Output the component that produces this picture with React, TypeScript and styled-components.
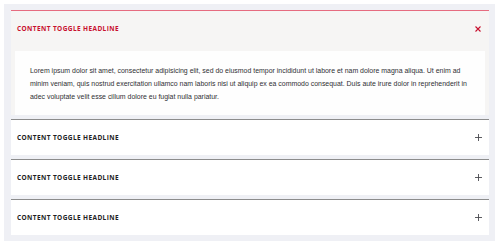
import React, { useState } from "react";
import styled, { createGlobalStyle } from "styled-components";

const GlobalStyle = createGlobalStyle`
  html, body { margin: 0; padding: 0; background: #ffffff; }
  body { font-family: "Open Sans", "Liberation Sans", Arial, sans-serif; }
`;

const Wrapper = styled.div`
  margin: 4px 5px 5px 4px;
  padding: 6px 6px 6px 7px;
  background: #eff0f5;
  display: flex;
  flex-direction: column;
  gap: 4px;
`;

const Item = styled.div<{ $open: boolean }>`
  background: ${(p) => (p.$open ? "#f6f5f4" : "#ffffff")};
  border-top: 1px solid ${(p) => (p.$open ? "#e66c80" : "#8c8c8c")};
  display: flex;
  flex-direction: column;
`;

const Header = styled.button<{ $open: boolean }>`
  all: unset;
  box-sizing: border-box;
  height: 35px;
  padding: 0 6px 0 6px;
  display: flex;
  align-items: center;
  justify-content: space-between;
  cursor: pointer;
  font-family: "Open Sans", sans-serif;
  font-weight: 700;
  font-size: 6.5px;
  letter-spacing: 0.4px;
  text-transform: uppercase;
  color: ${(p) => (p.$open ? "#c8102e" : "#1e1e24")};
`;

const Icon = styled.span`
  width: 8px;
  height: 8px;
  margin-right: 1px;
  display: flex;
  align-items: center;
  justify-content: center;
`;

const Body = styled.div`
  padding: 5px 4px 0 4px;
`;

const Panel = styled.div`
  background: #fefefe;
  padding: 13px 15px 12px 15px;
  font-family: "Liberation Sans", Arial, sans-serif;
  font-size: 6.95px;
  line-height: 13px;
  color: #2f2f33;
`;

const text =
  "Lorem ipsum dolor sit amet, consectetur adipisicing elit, sed do eiusmod tempor incididunt ut labore et nam dolore magna aliqua. Ut enim ad minim veniam, quis nostrud exercitation ullamco nam laboris nisi ut aliquip ex ea commodo consequat. Duis aute irure dolor in reprehenderit in adec voluptate velit esse cillum dolore eu fugiat nulla pariatur.";

const CloseIcon = () => (
  <svg width="6" height="6" viewBox="0 0 6 6">
    <path d="M0.5 0.5 L5.5 5.5 M5.5 0.5 L0.5 5.5" stroke="#c8102e" strokeWidth="1.1" />
  </svg>
);

const PlusIcon = () => (
  <svg width="7" height="7" viewBox="0 0 7 7">
    <path d="M3.5 0 V7 M0 3.5 H7" stroke="#4a4a4f" strokeWidth="0.9" />
  </svg>
);

export default function App() {
  const [open, setOpen] = useState(0);
  const items = [0, 1, 2, 3];
  return (
    <>
      <GlobalStyle />
      <Wrapper>
        {items.map((i) => {
          const isOpen = open === i;
          return (
            <Item key={i} $open={isOpen}>
              <Header $open={isOpen} onClick={() => setOpen(isOpen ? -1 : i)}>
                <span>Content Toggle Headline</span>
                <Icon>{isOpen ? <CloseIcon /> : <PlusIcon />}</Icon>
              </Header>
              {isOpen && (
                <Body>
                  <Panel>{text}</Panel>
                </Body>
              )}
            </Item>
          );
        })}
      </Wrapper>
    </>
  );
}
